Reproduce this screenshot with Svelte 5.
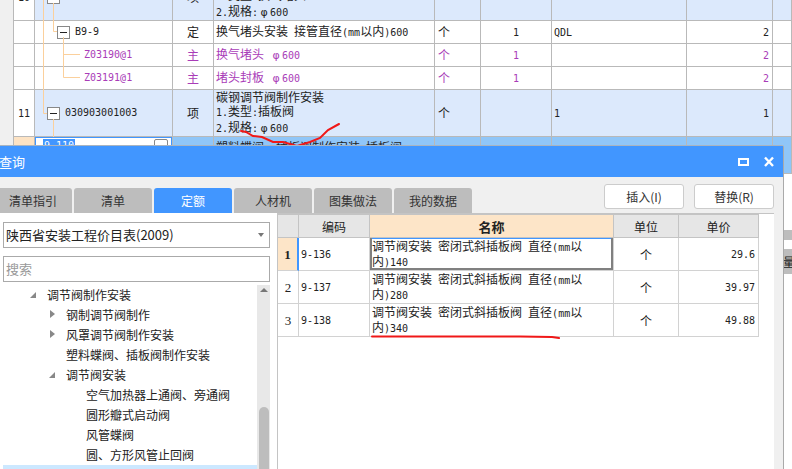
<script>
	const bgRows = [
		{ no: '10', pad: 12, box: true, code: '', type: '项', name: ['换气堵头安装', '1.类型:换气堵头', '2.规格:φ600'], unit: '', qty: '', mark: '', total: '', tall: true },
		{ no: '', pad: 22, box: true, code: 'B9-9', type: '定', name: ['换气堵头安装 接管直径(mm以内)600'], unit: '个', qty: '1', mark: 'QDL', total: '2' },
		{ no: '', pad: 49, code: 'Z03190@1', type: '主', name: ['换气堵头 φ600'], unit: '个', qty: '1', mark: '', total: '2', main: true },
		{ no: '', pad: 49, code: 'Z03191@1', type: '主', name: ['堵头封板 φ600'], unit: '个', qty: '1', mark: '', total: '2', main: true },
		{ no: '11', pad: 12, box: true, code: '030903001003', type: '项', name: ['碳钢调节阀制作安装', '1.类型:插板阀', '2.规格:φ600'], unit: '个', qty: '', mark: '1', total: '1', tall: true }
	];

	const tabs = ['清单指引', '清单', '定额', '人材机', '图集做法', '我的数据'];

	const tree = [
		{ level: 1, arrow: 'open', text: '调节阀制作安装' },
		{ level: 2, arrow: 'closed', text: '钢制调节阀制作' },
		{ level: 2, arrow: 'closed', text: '风罩调节阀制作安装' },
		{ level: 2, text: '塑料蝶阀、插板阀制作安装' },
		{ level: 2, arrow: 'open', text: '调节阀安装' },
		{ level: 3, text: '空气加热器上通阀、旁通阀' },
		{ level: 3, text: '圆形瓣式启动阀' },
		{ level: 3, text: '风管蝶阀' },
		{ level: 3, text: '圆、方形风管止回阀' },
		{ level: 3, text: '', selected: true }
	];

	const prices = [
		{ code: '9-136', size: '140', unit: '个', price: '29.6' },
		{ code: '9-137', size: '280', unit: '个', price: '39.97' },
		{ code: '9-138', size: '340', unit: '个', price: '49.88' }
	];

	// the latin runs are set smaller so they stay half as wide as the CJK
	function parts(s) {
		return s
			.split(/([\x20-\x7e]+|φ)/)
			.filter(Boolean)
			.map((t) => ({ t, latin: /^[\x20-\x7e]/.test(t), phi: t === 'φ' }));
	}
</script>

{#snippet txt(s)}{#each parts(s) as p}<span class:l={p.latin} class:phi={p.phi}>{p.t}</span>{/each}{/snippet}

<main class="page">
	<table class="sheet">
		<colgroup>
			<col style="width:21px" /><col style="width:138px" /><col style="width:41px" /><col style="width:221px" />
			<col style="width:46px" /><col style="width:71px" /><col style="width:135px" /><col style="width:86px" /><col />
		</colgroup>
		<tbody>
			{#each bgRows as r}
				<tr class:tall={r.tall} class:main={r.main}>
					<td class="center white">{@render txt(r.no)}</td>
					<td>
						<div class="code" style="padding-left:{r.pad}px">
							{#if r.box}<i class="box"></i>{/if}
							{@render txt(r.code)}
						</div>
					</td>
					<td class="center">{r.type}</td>
					<td class="name">
						{#each r.name as line}<div>{@render txt(line)}</div>{/each}
					</td>
					<td class="unit">{r.unit}</td>
					<td class="center">{@render txt(r.qty)}</td>
					<td class="mark">{@render txt(r.mark)}</td>
					<td class="right">{@render txt(r.total)}</td>
					<td></td>
				</tr>
			{/each}
			<tr class="current">
				<td class="rowno"></td>
				<td class="editing">
					<div class="edit-row">
						<span class="picked l">9-110</span>
						<i class="more"></i>
					</div>
				</td>
				<td></td>
				<td class="name top">{@render txt('塑料蝶阀、插板阀制作安装 插板阀')}</td>
				<td></td><td></td><td></td><td></td><td></td>
			</tr>
		</tbody>
	</table>

	<svg class="lines" width="172" height="137" fill="none" stroke="#fbd09c">
		<path d="M43.5 0V113.5H47M53.5 3V31.5H57M63.5 37V77.5H80M63.5 54.5H80M53.5 119V137" />
	</svg>
	<svg class="ink" width="792" height="469" fill="none" stroke="#f01818" stroke-width="2" stroke-linecap="round">
		<path d="M241 131L246 132L253 136L262 137L273 142L283 142L297 146L310 142L320 138L328 130L339 124" />
	</svg>

	<div class="side one"></div>
	<div class="side two">量</div>

	<section class="dialog">
		<header class="title">
			<span class="title-text">查询</span>
			<svg width="45" height="12" fill="none" stroke="#fff" stroke-width="2">
				<rect x="1" y="3" width="9" height="6" />
				<path d="M27 1.500L35 10M35 1.500L27 10" stroke-width="2.4" />
			</svg>
		</header>

		<div class="toolbar">
			<div class="tabs">
				{#each tabs as tab}
					<div class="tab" class:active={tab === '定额'}>{tab}</div>
				{/each}
			</div>
			<div class="actions">
				<button>插入(I)</button>
				<button>替换(R)</button>
			</div>
		</div>

		<div class="body">
			<div class="left">
				<div class="select">
					<span>陕西省安装工程价目表(2009)</span>
					<i class="caret"></i>
				</div>
				<div class="search">搜索</div>
				<div class="tree-wrap">
					<div class="tree">
						{#each tree as item}
							<div class="node lv{item.level}" class:selected={item.selected}>
								{#if item.arrow}<i class={item.arrow}></i>{/if}
								<span>{item.text}</span>
							</div>
						{/each}
					</div>
					<div class="scroll">
						<i class="up"></i>
						<div class="thumb"></div>
					</div>
				</div>
			</div>

			<div class="right-pane">
				<table class="prices">
					<colgroup>
						<col style="width:21px" /><col style="width:71px" /><col style="width:244px" /><col style="width:65px" /><col style="width:80px" />
					</colgroup>
					<thead>
						<tr>
							<th></th>
							<th>编码</th>
							<th class="hot">名称</th>
							<th>单位</th>
							<th>单价</th>
						</tr>
					</thead>
					<tbody>
						{#each prices as p, i}
							<tr>
								<td class="idx" class:on={i === 0}>{i + 1}</td>
								<td class="pcode">{p.code}</td>
								<td class="pname" class:focus={i === 0}>
									{@render txt('调节阀安装 密闭式斜插板阀 直径(mm以')}<br />{@render txt('内)' + p.size)}
								</td>
								<td class="punit">{p.unit}</td>
								<td class="pprice">{p.price}</td>
							</tr>
						{/each}
					</tbody>
				</table>
			</div>
		</div>
	</section>

	<svg class="ink" width="792" height="469" fill="none" stroke="#f01818" stroke-width="2" stroke-linecap="round">
		<path d="M372 336.500L450 336.500L520 336.500L552 337L559 338" />
	</svg>
</main>

<style>
	:global(body) {
		margin: 0;
	}
	.page {
		position: relative;
		width: 792px;
		height: 469px;
		overflow: hidden;
		background: #fff;
		color: #222;
		font-family: "Noto Sans CJK SC", "Liberation Sans", sans-serif;
		font-size: 12px;
	}
	.l {
		font-family: "DejaVu Sans Mono", monospace;
		font-size: 10px;
	}
	.phi {
		display: inline-block;
		width: 12px;
		text-align: center;
		font-family: "DejaVu Sans", sans-serif;
		font-size: 11px;
	}

	/* sheet behind the dialog */
	.sheet {
		table-layout: fixed;
		width: 779px;
		margin: -26px 0 0 13px;
		border-collapse: separate;
		border-spacing: 0;
		border-left: 1px solid #b9b9b9;
		box-shadow: -13px 0 0 #f0f0f0;
	}
	.sheet td {
		height: 22px;
		padding: 0;
		border-right: 1px solid #b9b9b9;
		border-bottom: 1px solid #b9b9b9;
		line-height: 14px;
		white-space: nowrap;
		overflow: hidden;
	}
	.sheet tr.tall td {
		height: 46px;
		background: #dce9fc;
	}
	.sheet tr.tall td.white {
		background: #fff;
	}
	.sheet tr.main {
		color: #a93cb8;
	}
	.center {
		text-align: center;
	}
	.right {
		text-align: right;
		padding-right: 3px !important;
	}
	.code {
		display: flex;
		align-items: center;
		gap: 5px;
	}
	.box {
		position: relative;
		width: 11px;
		height: 11px;
		border: 1px solid #888;
		background: #fff;
		flex: none;
	}
	.box::after {
		content: "";
		position: absolute;
		left: 2px;
		right: 2px;
		top: 5px;
		height: 1px;
		background: #222;
	}
	.name {
		padding-left: 2px !important;
	}
	.name.top {
		vertical-align: top;
		padding-top: 3px !important;
	}
	.unit {
		padding-left: 3px !important;
	}
	.mark {
		padding-left: 2px !important;
	}
	.sheet tr.current td {
		height: 33px;
		background: #90c6f8;
	}
	.sheet tr.current td.rowno {
		background: #fde3c4;
	}
	.sheet tr.current td.editing {
		background: #fff;
		box-shadow: inset 0 0 0 1px #4196ff;
		vertical-align: top;
	}
	.edit-row {
		display: flex;
		justify-content: space-between;
		padding: 2px 4px 0 8px;
	}
	.picked {
		background: #4196ff;
		color: #fff;
		padding: 0 1px;
	}
	.more {
		width: 12px;
		height: 12px;
		border: 1px solid #888;
		border-radius: 2px;
	}
	.lines {
		position: absolute;
		left: 0;
		top: 0;
	}
	.ink {
		position: absolute;
		left: 0;
		top: 0;
		pointer-events: none;
	}
	.side {
		position: absolute;
		left: 784px;
		width: 8px;
		background: #bdbdbd;
	}
	.side.one {
		top: 230px;
		height: 10px;
	}
	.side.two {
		top: 249px;
		height: 25px;
		line-height: 25px;
		white-space: nowrap;
		margin-left: -1px;
		width: 9px;
		overflow: hidden;
	}

	/* dialog */
	.dialog {
		position: absolute;
		left: 0;
		top: 145px;
		width: 784px;
		height: 324px;
		box-sizing: border-box;
		display: flex;
		flex-direction: column;
		background: #f0f0f0;
		border-top: 1px solid #a9b4c0;
		border-right: 1px solid #aaa;
		border-top-right-radius: 2px;
	}
	.title {
		flex: none;
		height: 31px;
		display: flex;
		align-items: center;
		justify-content: space-between;
		background: #4196ff;
		color: #fff;
		font-size: 13px;
	}
	.title-text {
		margin-left: -1px;
	}
	.toolbar {
		flex: none;
		display: flex;
		justify-content: space-between;
		height: 36px;
		padding: 7px 9px 0 0;
		box-sizing: border-box;
	}
	.tabs {
		display: flex;
		gap: 2px;
		margin: 4px 0 0 -6px;
	}
	.tab {
		width: 78px;
		height: 25px;
		line-height: 26px;
		text-align: center;
		background: #bdbdbd;
		color: #333;
		border-radius: 3px 3px 0 0;
	}
	.tab.active {
		background: #4196ff;
		color: #fff;
	}
	.actions {
		display: flex;
		gap: 10px;
	}
	.actions button {
		width: 80px;
		height: 25px;
		padding: 0;
		background: #fff;
		border: 1px solid #ccc;
		border-radius: 3px;
		color: #333;
		font: inherit;
		font-size: 12px;
	}
	.body {
		flex: 1;
		min-height: 0;
		display: flex;
		padding-right: 9px;
	}
	.left {
		flex: none;
		width: 277px;
		box-sizing: border-box;
		background: #fff;
		padding: 9px 7px 0 3px;
		display: flex;
		flex-direction: column;
		overflow: hidden;
	}
	.select,
	.search {
		flex: none;
		height: 24px;
		line-height: 24px;
		border: 1px solid #aaa;
		padding: 0 4px 0 2px;
	}
	.select {
		display: flex;
		align-items: center;
		justify-content: space-between;
		font-size: 13px;
	}
	.caret {
		width: 0;
		height: 0;
		border: 3px solid transparent;
		border-top: 4px solid #777;
		border-bottom: 0;
		margin-right: 1px;
	}
	.search {
		margin-top: 8px;
		color: #999;
		font-size: 13px;
	}
	.tree-wrap {
		flex: 1;
		min-height: 0;
		display: flex;
		margin-top: 3px;
	}
	.tree {
		flex: 1;
		overflow: hidden;
	}
	.node {
		height: 20px;
		line-height: 20px;
		position: relative;
		white-space: nowrap;
	}
	.node.lv1 {
		padding-left: 44px;
	}
	.node.lv2 {
		padding-left: 63px;
	}
	.node.lv3 {
		padding-left: 83px;
	}
	.node.selected {
		background: #cce8ff;
	}
	.open,
	.closed {
		position: absolute;
		top: 7px;
		width: 0;
		height: 0;
	}
	.open {
		margin-left: -17px;
		border-left: 6px solid transparent;
		border-bottom: 6px solid #888;
	}
	.closed {
		margin-left: -16px;
		top: 5px;
		border-top: 4px solid transparent;
		border-bottom: 4px solid transparent;
		border-left: 5px solid #888;
	}
	.scroll {
		flex: none;
		width: 13px;
		background: #e8e8e8;
		position: relative;
	}
	.up {
		position: absolute;
		left: 3px;
		top: 3px;
		width: 0;
		height: 0;
		border: 4px solid transparent;
		border-bottom: 4px solid #777;
		border-top: 0;
	}
	.thumb {
		position: absolute;
		left: 2px;
		top: 122px;
		width: 10px;
		height: 70px;
		background: #bdbdbd;
		border-radius: 5px;
	}
	.right-pane {
		flex: 1;
		background: #fff;
		border-left: 1px solid #c4c4c4;
		border-top: 1px solid #c4c4c4;
		box-sizing: border-box;
	}

	/* price table */
	.prices {
		table-layout: fixed;
		width: 481px;
		border-collapse: separate;
		border-spacing: 0;
		line-height: 13px;
	}
	.prices th {
		height: 22px;
		padding: 0;
		background: #e6e6e6;
		border-top: 1px solid #c4c4c4;
		border-right: 1px solid #c4c4c4;
		border-bottom: 1px solid #c4c4c4;
		font-weight: 400;
		font-size: 12px;
	}
	.prices th.hot {
		background: #fde5c8;
		font-weight: 700;
		font-size: 13px;
	}
	.prices td {
		height: 32px;
		padding: 0;
		border-right: 1px solid #d2d2d2;
		border-bottom: 1px solid #d2d2d2;
	}
	.idx {
		text-align: center;
		font-family: "Liberation Serif", serif;
		font-size: 13px;
	}
	.idx.on {
		background: #fde5c8;
		font-weight: 700;
		border-right: 2px solid #4196ff !important;
	}
	.pcode {
		padding-left: 2px !important;
		font-family: "DejaVu Sans Mono", monospace;
		font-size: 10px;
	}
	.pname {
		padding-left: 2px !important;
		white-space: nowrap;
	}
	.pname.focus {
		box-shadow: inset 2px 0 #808080, inset -2px 0 #808080, inset 0 -2px #808080, inset 0 1px #4196ff;
	}
	.punit {
		text-align: center;
	}
	.pprice {
		text-align: right;
		padding-right: 3px !important;
		font-family: "DejaVu Sans Mono", monospace;
		font-size: 10px;
	}
</style>
